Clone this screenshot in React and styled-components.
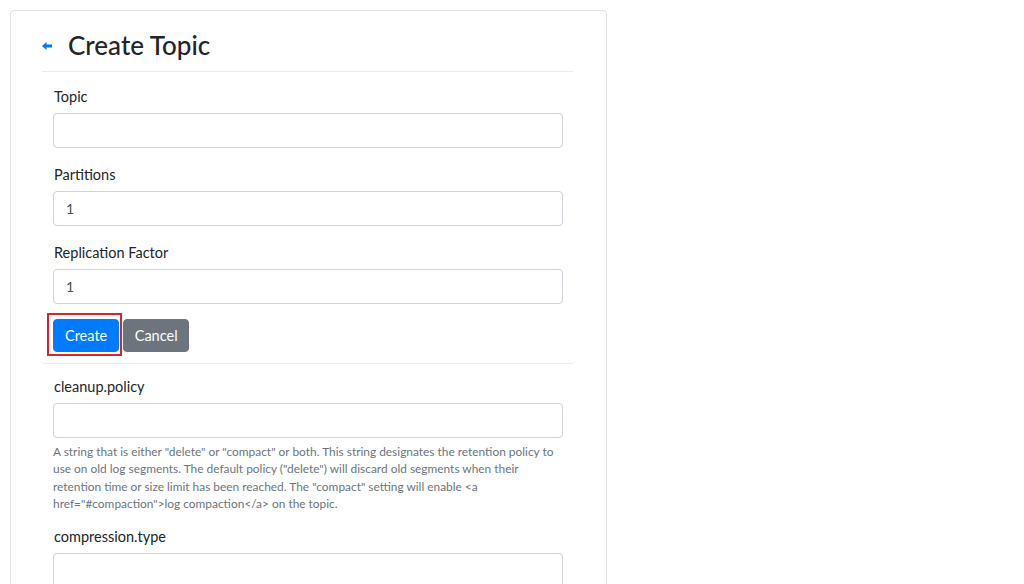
import React from "react";
import styled, {createGlobalStyle} from "styled-components";

const GlobalStyle = createGlobalStyle`
    body {
        margin: 0;
        background: #fff;
        font-family: "Segoe UI", Lato, "Noto Sans", "Liberation Sans", sans-serif;
        color: #212529;
    }
`

const Page = styled.div`
    padding: 10px;
    height: 584px;
    box-sizing: border-box;
    overflow: hidden;
`

const Card = styled.div`
    width: 597px;
    box-sizing: border-box;
    border: 1px solid #e3e3e3;
    border-radius: 4px;
    padding: 14px 33px 0 31px;
    min-height: 600px;
`

const Header = styled.div`
    display: flex;
    align-items: center;
    height: 47px;
    box-sizing: border-box;
    padding-bottom: 6px;
    border-bottom: 1px solid #e9ecef;
`

const BackLink = styled.a`
    display: flex;
    align-items: center;
    width: 26px;
    padding-top: 2px;
    color: #007bff;
`

const Title = styled.h3`
    margin: 0;
    font-size: 26px;
    font-weight: 500;
    line-height: 1;
    color: #212529;
`

const Section = styled.div`
    padding: ${props => (props.divided ? "14px 12px 7px 12px" : "12px 10px 6px 11px")};
    margin: ${props => (props.divided ? "0 -2px 0 -1px" : "0")};
    border-bottom: ${props => (props.divided ? "1px solid #e9ecef" : "none")};
    border-radius: 0 0 4px 4px;
`

const Group = styled.div`
    margin-bottom: 16px;
`

const Label = styled.label`
    display: block;
    font-size: 14.5px;
    line-height: 21px;
    margin-bottom: 6px;
    padding-left: 1px;
`

const Input = styled.input`
    display: block;
    width: 100%;
    height: 35px;
    box-sizing: border-box;
    padding: 6px 12px;
    font-family: inherit;
    font-size: 14px;
    color: #495057;
    border: 1px solid #ced4da;
    border-radius: 4px;
    background: #fff;
`

const Help = styled.small`
    display: block;
    margin-top: 5px;
    margin-bottom: -3px;
    font-size: 11.9px;
    line-height: 17.4px;
    color: #6c757d;
    padding-right: 8px;
`

const Buttons = styled.div`
    display: flex;
    align-items: center;
    gap: 1px;
    margin-top: -7px;
`

const Highlight = styled.div`
    border: 2px solid #d9232d;
    padding: 4px 1px 2px 4px;
    margin-left: -6px;
    display: flex;
`

const Button = styled.button`
    height: 33px;
    padding: 0 ${props => (props.secondary ? "10.5px" : "11px")};
    margin-top: ${props => (props.secondary ? "1px" : "0")};
    font-family: inherit;
    font-size: 14.5px;
    border: 1px solid ${props => (props.secondary ? "#6c757d" : "#007bff")};
    background: ${props => (props.secondary ? "#6c757d" : "#007bff")};
    color: #fff;
    border-radius: 4px;
`

function ArrowLeft() {
    return (
        <svg width="10" height="8" viewBox="0 0 10 8" fill="currentColor">
            <polygon points="0,4 4.5,0 4.5,2.6 10,2.6 10,5.4 4.5,5.4 4.5,8"/>
        </svg>
    );
}

function Field({label, value, help}) {
    return (
        <Group>
            <Label>{label}</Label>
            <Input defaultValue={value}/>
            {help && <Help>{help}</Help>}
        </Group>
    );
}

export default function App() {
    return (
        <Page>
            <GlobalStyle/>
            <Card>
                <Header>
                    <BackLink><ArrowLeft/></BackLink>
                    <Title>Create Topic</Title>
                </Header>
                <Section divided>
                    <Field label="Topic" value=""/>
                    <Field label="Partitions" value="1"/>
                    <Field label="Replication Factor" value="1"/>
                    <Buttons>
                        <Highlight>
                            <Button>Create</Button>
                        </Highlight>
                        <Button secondary>Cancel</Button>
                    </Buttons>
                </Section>
                <Section>
                    <Field label="cleanup.policy" value=""
                           help={'A string that is either "delete" or "compact" or both. This string designates the retention policy to use on old log segments. The default policy ("delete") will discard old segments when their retention time or size limit has been reached. The "compact" setting will enable <a href="#compaction">log compaction</a> on the topic.'}/>
                    <Field label="compression.type" value=""/>
                </Section>
            </Card>
        </Page>
    );
}
